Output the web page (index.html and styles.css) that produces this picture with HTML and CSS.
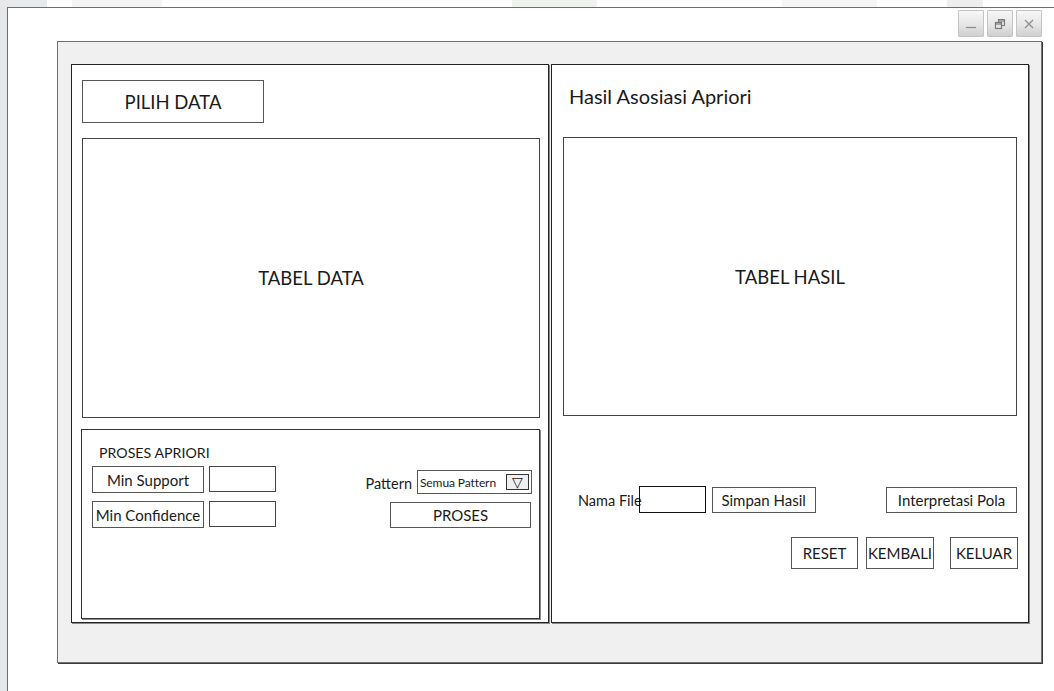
FILE: index.html
```html
<!DOCTYPE html>
<html lang="id">
<head>
<meta charset="utf-8">
<title>Hasil Asosiasi Apriori</title>
<link rel="stylesheet" href="styles.css">
</head>
<body>
<div class="screen">
  <div class="topstrip">
    <span class="mark mark-a"></span>
    <span class="mark mark-b"></span>
    <span class="mark mark-c"></span>
    <span class="mark mark-d"></span>
    <span class="mark mark-e"></span>
  </div>
  <div class="desk">
    <div class="gutter"></div>
    <div class="window">
      <div class="titlebar">
        <button class="winbtn" aria-label="Minimize">
          <svg width="12" height="12" viewBox="0 0 12 12"><path d="M1 9.5H11" stroke="#8a8a8a" stroke-width="1.2"/></svg>
        </button>
        <button class="winbtn" aria-label="Restore">
          <svg width="12" height="12" viewBox="0 0 12 12" fill="none" stroke="#7a7a7a" stroke-width="1.2"><rect x="1.5" y="4.5" width="6" height="6"/><path d="M1.5 6H7.5"/><path d="M4.5 4.5V1.5H10.5V7.5H7.5"/><path d="M4.5 3H10.5"/></svg>
        </button>
        <button class="winbtn" aria-label="Close">
          <svg width="12" height="12" viewBox="0 0 12 12"><path d="M2 2L10 10M10 2L2 10" stroke="#8a8a8a" stroke-width="1.1"/></svg>
        </button>
      </div>
      <div class="frame">
        <section class="panel panel-left">
          <div class="btn btn-pick">PILIH DATA</div>
          <div class="tablebox table-data">TABEL DATA</div>
          <div class="proc">
            <div class="proc-title">PROSES APRIORI</div>
            <div class="proc-body">
              <div class="proc-left">
                <div class="field-row">
                  <div class="btn btn-field">Min Support</div>
                  <div class="input input-sm"></div>
                </div>
                <div class="field-row">
                  <div class="btn btn-field">Min Confidence</div>
                  <div class="input input-sm"></div>
                </div>
              </div>
              <div class="proc-right">
                <div class="pattern-row">
                  <span class="pattern-label">Pattern</span>
                  <div class="select">
                    <span class="select-text">Semua Pattern</span>
                    <span class="select-arrow">&#9661;</span>
                  </div>
                </div>
                <div class="btn btn-proses">PROSES</div>
              </div>
            </div>
          </div>
        </section>
        <section class="panel panel-right">
          <div class="panel-title">Hasil Asosiasi Apriori</div>
          <div class="tablebox table-hasil">TABEL HASIL</div>
          <div class="file-row">
            <span class="file-label">Nama File</span>
            <div class="input input-file"></div>
            <div class="btn btn-save">Simpan Hasil</div>
            <div class="btn btn-interp">Interpretasi Pola</div>
          </div>
          <div class="action-row">
            <div class="btn btn-act">RESET</div>
            <div class="btn btn-act btn-kembali">KEMBALI</div>
            <div class="btn btn-act btn-keluar">KELUAR</div>
          </div>
        </section>
      </div>
    </div>
  </div>
</div>
</body>
</html>
```

FILE: styles.css
```css
* { box-sizing: border-box; }

html, body {
  margin: 0;
  padding: 0;
  background: #ffffff;
}

body {
  font-family: Lato, "Open Sans", "Liberation Sans", sans-serif;
  color: #1a1a1a;
  width: 1054px;
  height: 691px;
  overflow: hidden;
}

.screen {
  display: flex;
  flex-direction: column;
  height: 691px;
}

/* faint strip above the window */
.topstrip {
  height: 7px;
  display: flex;
  flex-shrink: 0;
}
.mark { height: 7px; display: block; }
.mark-a { width: 47px; background: #e8e9ea; }
.mark-b { width: 90px; margin-left: 25px; background: #f3f4f3; }
.mark-c { width: 85px; margin-left: 350px; background: #eef2ee; }
.mark-d { width: 95px; margin-left: 185px; background: #f4f5f4; }
.mark-e { width: 36px; margin-left: 70px; background: #eeeeee; }

.desk {
  flex: 1;
  display: flex;
}

.gutter {
  width: 7px;
  background: #e6e7e8;
  flex-shrink: 0;
}

.window {
  flex: 1;
  background: #ffffff;
  border-left: 1px solid #6e6e6e;
  border-top: 1px solid #6e6e6e;
}

.titlebar {
  height: 33px;
  display: flex;
  justify-content: flex-end;
  gap: 3px;
  padding: 2px 12px 0 0;
}

.winbtn {
  width: 26px;
  height: 27px;
  padding: 0;
  border: 1px solid #c4c4c4;
  border-radius: 1px;
  background: linear-gradient(#f7f7f7, #e6e6e6 55%, #cfcfcf);
  display: flex;
  align-items: center;
  justify-content: center;
}

.frame {
  margin-left: 49px;
  width: 985px;
  height: 622px;
  background: #f0f0f0;
  border: 1px solid #707070;
  box-shadow: 1px 1px 0 #3a3a3a;
  display: flex;
  gap: 2px;
  padding: 22px 0 0 13px;
}

.panel {
  width: 478px;
  height: 559px;
  background: #ffffff;
  border: 1px solid #222;
  box-shadow: 1px 1px 0 #8a8a8a;
  display: flex;
  flex-direction: column;
}

.btn {
  border: 1px solid #555;
  background: #ffffff;
  display: flex;
  align-items: center;
  justify-content: center;
  font-size: 15px;
  white-space: nowrap;
}

.input {
  border: 1px solid #444;
  background: transparent;
}

.tablebox {
  border: 1px solid #444;
  display: flex;
  align-items: center;
  justify-content: center;
  font-size: 18.5px;
}

/* left panel */
.panel-left { padding: 15px 0 0 10px; }

.btn-pick {
  width: 182px;
  height: 43px;
  font-size: 18.5px;
  padding-top: 1px;
}

.table-data {
  margin-top: 15px;
  width: 458px;
  height: 280px;
}

.proc {
  margin-top: 11px;
  margin-left: -1px;
  width: 459px;
  height: 190px;
  border: 1px solid #333;
  box-shadow: 1px 1px 0 #8a8a8a;
  padding: 14px 7px 0 10px;
}

.proc-title {
  margin-left: 7px;
  height: 18px;
  line-height: 18px;
  font-size: 14.2px;
  margin-bottom: 4px;
}

.proc-body {
  display: flex;
  justify-content: space-between;
}

.proc-left {
  display: flex;
  flex-direction: column;
  gap: 8px;
}

.field-row {
  display: flex;
  gap: 5px;
}

.btn-field { width: 112px; height: 27px; }
.input-sm { width: 67px; height: 26px; }

.proc-right {
  display: flex;
  flex-direction: column;
  align-items: flex-end;
  padding-top: 4px;
  gap: 8px;
}

.pattern-row {
  display: flex;
  align-items: flex-end;
  gap: 5px;
}

.pattern-label {
  font-size: 14.5px;
  line-height: 18px;
  padding-bottom: 1px;
}

.select {
  width: 115px;
  height: 24px;
  border: 1px solid #555;
  display: flex;
  align-items: center;
  justify-content: space-between;
  padding: 0 2px 0 2px;
}

.select-text {
  font-size: 12px;
  letter-spacing: -0.1px;
}

.select-arrow {
  width: 23px;
  height: 16px;
  border: 1px solid #333;
  background: #efefef;
  font-size: 14px;
  line-height: 14px;
  text-align: center;
  color: #111;
}

.btn-proses {
  width: 141px;
  height: 26px;
  margin-right: 1px;
}

/* right panel */
.panel-right { padding: 19px 10px 0 11px; }

.panel-title {
  margin-left: 6px;
  height: 24px;
  line-height: 24px;
  font-size: 20px;
}

.table-hasil {
  margin-top: 29px;
  width: 454px;
  height: 279px;
}

.file-row {
  margin-top: 70px;
  display: flex;
  align-items: center;
  padding-left: 15px;
}

.file-label {
  font-size: 14.5px;
  line-height: 18px;
  padding-top: 3px;
}

.input-file {
  width: 67px;
  height: 27px;
  margin-left: -3px;
  border-color: #111;
}

.btn-save {
  margin-left: 6px;
  width: 104px;
  height: 26px;
}

.btn-interp {
  margin-left: auto;
  margin-right: 1px;
  width: 131px;
  height: 26px;
}

.action-row {
  margin-top: 24px;
  display: flex;
  justify-content: flex-end;
}

.btn-act {
  width: 67px;
  height: 32px;
}
.btn-kembali { margin-left: 8px; width: 68px; }
.btn-keluar { margin-left: 16px; width: 68px; }
```
